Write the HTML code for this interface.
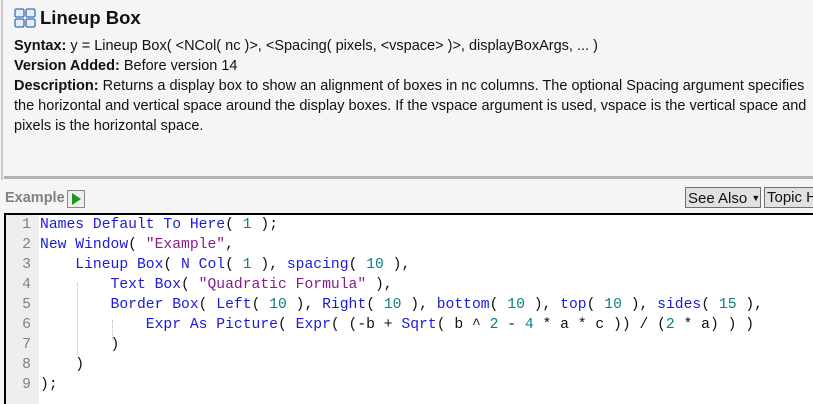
<!DOCTYPE html>
<html><head><style>
html,body{margin:0;padding:0;}
body{width:813px;height:402px;overflow:hidden;background:#f5f5f5;position:relative;font-family:"Liberation Sans",sans-serif;color:#111;}
.lb{position:absolute;left:1px;top:0;width:2px;height:180px;background:#c8c8c8;}
.t{position:absolute;left:14px;white-space:nowrap;font-size:14.5px;}
.sep{position:absolute;left:4px;top:176px;width:809px;height:3px;background:#b4b4b4;}
.code{position:absolute;left:4px;top:213px;width:809px;height:189px;background:#fff;border-top:2px solid #000;border-left:2px solid #000;}
.gut{position:absolute;left:0;top:0;width:33px;height:100%;background:#eeeeee;}
.ln{position:absolute;left:0;width:25px;text-align:right;font-family:"Liberation Mono",monospace;font-size:14.7px;color:#808080;}
.cl{position:absolute;left:34px;font-family:"Liberation Mono",monospace;font-size:14.7px;white-space:pre;color:#111;}
.k{color:#1a1adb}.s{color:#8b1a8b}.n{color:#0a8080}
.btn{position:absolute;top:187px;height:21px;border:1px solid #707070;background:#e1e1e1;font-size:15px;line-height:20px;padding:0 2px;box-sizing:border-box;white-space:nowrap;overflow:hidden;}
.guide{position:absolute;border-left:1px dotted #bbb;}
</style></head><body>
<div class="lb"></div>
<svg style="position:absolute;left:14px;top:8px" width="23" height="21" viewBox="0 0 23 21">
<rect x="1" y="1" width="9" height="8" rx="1.5" fill="#e6edf7" stroke="#3a6fb0" stroke-width="1.3"/>
<rect x="12" y="1" width="9" height="8" rx="1.5" fill="#e6edf7" stroke="#3a6fb0" stroke-width="1.3"/>
<rect x="1" y="11" width="9" height="8" rx="1.5" fill="#e6edf7" stroke="#3a6fb0" stroke-width="1.3"/>
<rect x="12" y="11" width="9" height="8" rx="1.5" fill="#e6edf7" stroke="#3a6fb0" stroke-width="1.3"/>
</svg>
<div class="t" style="left:40px;top:7px;font-size:18.5px;font-weight:bold">Lineup Box</div>
<div class="t" style="top:38px"><b>Syntax:</b> y = Lineup Box( &lt;NCol( nc )&gt;, &lt;Spacing( pixels, &lt;vspace&gt; )&gt;, displayBoxArgs, ... )</div>
<div class="t" style="top:58px"><b>Version Added:</b> Before version 14</div>
<div class="t" style="top:78px"><b>Description:</b> Returns a display box to show an alignment of boxes in nc columns. The optional Spacing argument specifies</div>
<div class="t" style="top:98px">the horizontal and vertical space around the display boxes. If the vspace argument is used, vspace is the vertical space and</div>
<div class="t" style="top:118px">pixels is the horizontal space.</div>
<div class="sep"></div>
<div class="t" style="left:5px;top:190px;font-weight:bold;color:#808080;font-size:14.5px">Example</div>
<div style="position:absolute;left:67px;top:190px;width:18px;height:18px;border:1px solid #888;background:#eee;box-sizing:border-box">
<svg width="16" height="16" viewBox="0 0 16 16"><path d="M4 2 L13 8 L4 14 Z" fill="#1a9a1a"/></svg></div>
<div class="btn" style="left:685px;width:76px">See Also <span style="font-size:9px;vertical-align:2px">▼</span></div>
<div class="btn" style="left:764px;width:60px;border-right:none">Topic H</div>
<div class="code">
<div class="gut"></div>
<div class="guide" style="left:71px;top:68px;height:72px"></div>
<div class="guide" style="left:106px;top:105px;height:20px"></div>
<div class="ln" style="top:2px">1</div><div class="ln" style="top:22px">2</div><div class="ln" style="top:42px">3</div><div class="ln" style="top:62px">4</div><div class="ln" style="top:82px">5</div><div class="ln" style="top:102px">6</div><div class="ln" style="top:122px">7</div><div class="ln" style="top:142px">8</div><div class="ln" style="top:162px">9</div>
<div class="cl" style="top:2px"><span class="k">Names Default To Here</span>( <span class="n">1</span> );</div>
<div class="cl" style="top:22px"><span class="k">New Window</span>( <span class="s">"Example"</span>,</div>
<div class="cl" style="top:42px">    <span class="k">Lineup Box</span>( <span class="k">N Col</span>( <span class="n">1</span> ), <span class="k">spacing</span>( <span class="n">10</span> ),</div>
<div class="cl" style="top:62px">        <span class="k">Text Box</span>( <span class="s">"Quadratic Formula"</span> ),</div>
<div class="cl" style="top:82px">        <span class="k">Border Box</span>( <span class="k">Left</span>( <span class="n">10</span> ), <span class="k">Right</span>( <span class="n">10</span> ), <span class="k">bottom</span>( <span class="n">10</span> ), <span class="k">top</span>( <span class="n">10</span> ), <span class="k">sides</span>( <span class="n">15</span> ),</div>
<div class="cl" style="top:102px">            <span class="k">Expr As Picture</span>( <span class="k">Expr</span>( (-b + <span class="k">Sqrt</span>( b ^ <span class="n">2</span> - <span class="n">4</span> * a * c )) / (<span class="n">2</span> * a) ) )</div>
<div class="cl" style="top:122px">        )</div>
<div class="cl" style="top:142px">    )</div>
<div class="cl" style="top:162px">);</div>
</div>
</body></html>
